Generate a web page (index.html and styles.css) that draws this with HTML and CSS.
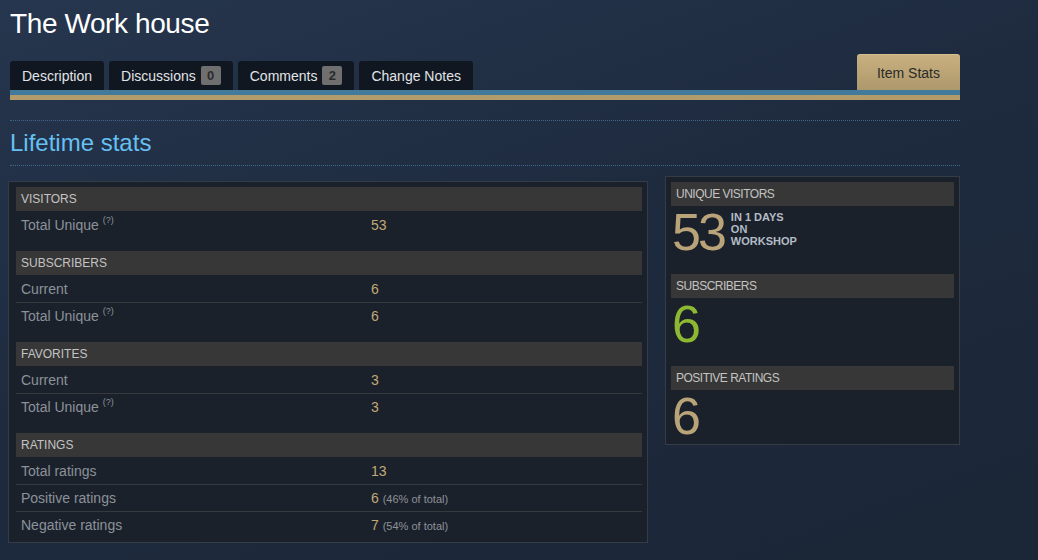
FILE: index.html
```html
<!DOCTYPE html>
<html lang="en">
  <head>
    <title>The Work house :: Item Stats</title>
    <meta charset="utf-8">
    <link rel="stylesheet" href="styles.css">
  </head>
  <body>

  <div class="page">
    <h1 class="item-title">The Work house</h1>

    <div class="tabs">
      <a class="tab" href="#">Description</a>
      <a class="tab" href="#">Discussions <span class="badge">0</span></a>
      <a class="tab" href="#">Comments <span class="badge">2</span></a>
      <a class="tab" href="#">Change Notes</a>
      <a class="tab tab-active" href="#">Item Stats</a>
    </div>
    <div class="tab-rule"></div>

    <h2 class="section-title">Lifetime stats</h2>

    <div class="stats">
      <div class="stats-table">
        <div class="group">
          <div class="group-head">Visitors</div>
          <div class="row"><span class="label">Total Unique <sup>(?)</sup></span><span class="value">53</span></div>
        </div>
        <div class="group">
          <div class="group-head">Subscribers</div>
          <div class="row"><span class="label">Current</span><span class="value">6</span></div>
          <div class="row"><span class="label">Total Unique <sup>(?)</sup></span><span class="value">6</span></div>
        </div>
        <div class="group">
          <div class="group-head">Favorites</div>
          <div class="row"><span class="label">Current</span><span class="value">3</span></div>
          <div class="row"><span class="label">Total Unique <sup>(?)</sup></span><span class="value">3</span></div>
        </div>
        <div class="group">
          <div class="group-head">Ratings</div>
          <div class="row"><span class="label">Total ratings</span><span class="value">13</span></div>
          <div class="row"><span class="label">Positive ratings</span><span class="value">6 <small>(46% of total)</small></span></div>
          <div class="row"><span class="label">Negative ratings</span><span class="value">7 <small>(54% of total)</small></span></div>
        </div>
      </div>

      <div class="summary">
        <div class="summary-block">
          <div class="group-head wide">Unique Visitors</div>
          <div class="big-line">
            <span class="big">53</span>
            <span class="big-note">In 1 days<br>on<br>workshop</span>
          </div>
        </div>
        <div class="summary-block">
          <div class="group-head wide">Subscribers</div>
          <div class="big-line"><span class="big green">6</span></div>
        </div>
        <div class="summary-block">
          <div class="group-head wide">Positive Ratings</div>
          <div class="big-line"><span class="big">6</span></div>
        </div>
      </div>
    </div>
  </div>

  </body>
</html>
```

FILE: styles.css
```css
      html {
        height: 100%;
      }
      body {
        margin: 0;
        padding: 0;
        min-height: 100%;
        background: #1b2838 linear-gradient(160deg, #26364e 0%, #1e2b3f 45%, #1b2636 100%);
        color: #ffffff;
        font-family: "Liberation Sans", Arial, sans-serif;
        font-size: 14px;
      }
      .page {
        width: 950px;
        margin-left: 10px;
      }
      .item-title {
        margin: 8px 0 0 0;
        height: 32px;
        font-size: 28px;
        line-height: 32px;
        font-weight: normal;
        letter-spacing: -0.4px;
        color: #ffffff;
      }

      /* tabs */
      .tabs {
        display: flex;
        align-items: flex-end;
        gap: 5px;
        height: 36px;
        margin-top: 14px;
      }
      .tab {
        display: flex;
        align-items: center;
        height: 29px;
        padding: 0 12px;
        background-color: #101720;
        border-radius: 3px 3px 0 0;
        color: #e1e4e7;
        text-decoration: none;
        font-size: 14px;
      }
      .badge {
        display: inline-block;
        min-width: 20px;
        height: 19px;
        line-height: 19px;
        margin-left: 5px;
        text-align: center;
        background-color: #6f6f6f;
        border-radius: 2px;
        color: #2b2b2b;
        font-size: 13px;
        font-weight: bold;
      }
      .tab-active {
        margin-left: auto;
        height: 36px;
        padding: 0 20px;
        background: linear-gradient(to bottom, #c9b07f 0%, #ad986c 100%);
        border-top: 1px solid #d6be8e;
        box-sizing: border-box;
        color: #2a2a2a;
      }
      .tab-rule {
        height: 5px;
        background-color: #417a9b;
        border-bottom: 5px solid #b29c6c;
      }

      .section-title {
        margin: 20px 0 0 0;
        height: 44px;
        border-top: 1px dotted #3f6789;
        border-bottom: 1px dotted #3f6789;
        font-size: 24px;
        line-height: 44px;
        font-weight: normal;
        color: #66c0f4;
      }

      /* stats area */
      .stats {
        display: flex;
        justify-content: space-between;
        align-items: flex-start;
        margin-top: 10px;
      }
      .stats-table {
        width: 640px;
        margin: 5px 0 0 -2px;
        padding: 5px 5px 4px 7px;
        box-sizing: border-box;
        background-color: #1b212b;
        border: 1px solid #343c47;
      }
      .group + .group {
        margin-top: 13px;
      }
      .group-head {
        height: 24px;
        line-height: 24px;
        padding-left: 5px;
        background-color: #373737;
        color: #c3c3c3;
        font-size: 12px;
        text-transform: uppercase;
      }
      .row {
        display: flex;
        height: 27px;
        line-height: 26px;
        box-sizing: border-box;
        border-top: 1px solid transparent;
        color: #8b9299;
      }
      .row + .row {
        border-top-color: #363a3f;
      }
      .label {
        width: 350px;
        padding-left: 5px;
      }
      .label sup {
        font-size: 9px;
        line-height: 0;
        vertical-align: 7px;
      }
      .value {
        color: #c2a876;
      }
      .value small {
        font-size: 11px;
        color: #8b9299;
      }

      .summary {
        width: 295px;
        padding: 5px 5px 2px 5px;
        box-sizing: border-box;
        background-color: #1b212b;
        border: 1px solid #343c47;
      }
      .group-head.wide {
        font-size: 12px;
        letter-spacing: -0.5px;
      }
      .summary-block + .summary-block {
        margin-top: 16px;
      }
      .big-line {
        display: flex;
        align-items: flex-start;
        gap: 7px;
        padding-left: 1px;
      }
      .big {
        font-size: 52px;
        line-height: 52px;
        letter-spacing: -3px;
        color: #b9a379;
      }
      .big.green {
        color: #8db932;
      }
      .big-note {
        margin-top: 5px;
        font-size: 11px;
        line-height: 12px;
        font-weight: bold;
        text-transform: uppercase;
        color: #b3bcc6;
      }
```
